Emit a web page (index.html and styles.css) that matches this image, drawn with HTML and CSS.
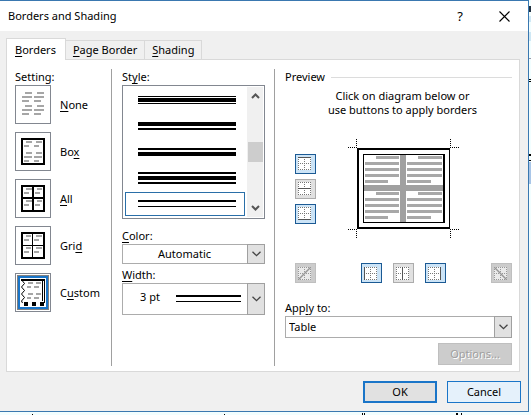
FILE: index.html
```html
<!DOCTYPE html>
<html lang="en">
<head>
    <meta charset="UTF-8">
    <meta name="viewport" content="width=device-width, initial-scale=1.0">
    <title>Borders and Shading</title>
    <link rel="stylesheet" href="styles.css">
</head>
<body>

<!-- shared drawings -->
<svg class="defs" width="0" height="0" aria-hidden="true">
    <symbol id="chevron" viewBox="0 0 9 6">
        <path d="M.5 .7 4.5 4.7 8.5 .7" fill="none" stroke="#444" stroke-width="1.3"/>
    </symbol>
    <symbol id="cell" viewBox="0 0 13 13">
        <rect width="13" height="13" fill="#fff"/>
        <path d="M0 .5h13M0 6.5h13M0 12.5h13M.5 0v13M6.5 0v13M12.5 0v13" stroke="#777" stroke-dasharray="1 1"/>
    </symbol>
</svg>

<div class="dialog" role="dialog" aria-labelledby="title">
    <div class="titlebar">
        <h1 id="title">Borders and Shading</h1>
        <button type="button" class="title-btn help" aria-label="Help">?</button>
        <button type="button" class="title-btn" aria-label="Close">
            <svg width="11" height="11" viewBox="0 0 11 11"><path d="M.5 .5l10 10M10.5 .5l-10 10" stroke="#000" stroke-width="1.1"/></svg>
        </button>
    </div>

    <div class="tabs" role="tablist">
        <button type="button" class="tab active" role="tab" aria-selected="true"><u>B</u>orders</button>
        <button type="button" class="tab" role="tab"><u>P</u>age Border</button>
        <button type="button" class="tab" role="tab"><u>S</u>hading</button>
    </div>

    <div class="panel" role="tabpanel">
        <div class="settings">
            <h2>Setting:</h2>
            <button type="button" class="setting">
                <svg width="36" height="39" viewBox="0 0 36 39">
                    <path d="M10 8h7M7 12h10M7 16h7M22 8h7M19 12h10M19 16h7M10 21h7M7 25h10M7 29h7M22 21h7M19 25h10M19 29h7" stroke="#a6a6a6" stroke-width="2"/>
                </svg>
                <span><u>N</u>one</span>
            </button>
            <button type="button" class="setting">
                <svg width="36" height="39" viewBox="0 0 36 39">
                    <rect x="7" y="7" width="22" height="25" fill="none" stroke="#000" stroke-width="2"/>
                    <path d="M11 10h6M9 14h5M21 10h6M19 14h5M11 21h6M9 25h8M9 29h5M21 21h6M19 25h8M19 29h5" stroke="#a6a6a6" stroke-width="2"/>
                </svg>
                <span>Bo<u>x</u></span>
            </button>
            <button type="button" class="setting">
                <svg width="36" height="39" viewBox="0 0 36 39">
                    <path d="M11 10h6M9 14h5M22 10h5M20 14h5M11 22h6M9 26h5M22 22h5M20 26h5" stroke="#a6a6a6" stroke-width="2"/>
                    <path d="M7 7h22v25H7zM18 7v25M7 19h22" fill="none" stroke="#000" stroke-width="2"/>
                </svg>
                <span><u>A</u>ll</span>
            </button>
            <button type="button" class="setting">
                <svg width="36" height="39" viewBox="0 0 36 39">
                    <path d="M11 10h5M9 14h5M21 10h6M19 14h5M11 22h5M9 26h5M21 22h6M19 26h5" stroke="#a6a6a6" stroke-width="2"/>
                    <path d="M17.5 7v25M7 19.5h22" stroke="#000"/>
                    <rect x="7" y="7" width="22" height="25" fill="none" stroke="#000" stroke-width="2"/>
                </svg>
                <span>Gri<u>d</u></span>
            </button>
            <button type="button" class="setting" aria-pressed="true">
                <svg width="36" height="39" viewBox="0 0 36 39">
                    <rect x="2.5" y="2.5" width="31" height="34" fill="none" stroke="#000" stroke-dasharray="1 1"/>
                    <rect x="4" y="4" width="28" height="31" fill="none" stroke="#1a75c8" stroke-width="2"/>
                    <path d="M6 7h24" stroke="#000" stroke-width="2"/>
                    <path d="M7.5 8l2 2.5-3 3.5 3 3.5-3 3.5 3 3.5-3 3.5 1 2" fill="none" stroke="#000"/>
                    <path d="M27.5 8v20M29.5 8v22" stroke="#000"/>
                    <path d="M13 10h5M12 14h4M21 10h5M19 14h5M13 21h5M12 25h4M21 21h5M19 25h5" stroke="#a6a6a6" stroke-width="2"/>
                    <path d="M9 29h4v4H9zM17 29h4v4h-4zM25 29h4v4h-4z"/>
                </svg>
                <span>C<u>u</u>stom</span>
            </button>
        </div>

        <div class="line-options">
            <h2 id="style-label">St<u>y</u>le:</h2>
            <div class="listbox">
                <div class="items" role="listbox" aria-labelledby="style-label">
                    <div class="item" role="option"><svg width="98" height="12"><path d="M0 2h98v1H0zM0 4h98v4H0zM0 9h98v1H0z"/></svg></div>
                    <div class="item" role="option"><svg width="98" height="12"><path d="M0 2h98v4H0zM0 8h98v2H0z"/></svg></div>
                    <div class="item" role="option"><svg width="98" height="12"><path d="M0 2h98v2H0zM0 6h98v4H0z"/></svg></div>
                    <div class="item" role="option"><svg width="98" height="12"><path d="M0 0h98v2H0zM0 4h98v4H0zM0 10h98v2H0z"/></svg></div>
                    <div class="item selected" role="option" aria-selected="true"><svg width="98" height="12"><path d="M0 2h98v2H0zM0 8h98v1H0z"/></svg></div>
                </div>
                <div class="scrollbar">
                    <svg width="9" height="6" viewBox="0 0 9 6"><path d="M1 5l3.5-3.5L8 5" fill="none" stroke="#555" stroke-width="2"/></svg>
                    <div class="thumb"></div>
                    <svg width="9" height="6" viewBox="0 0 9 6"><path d="M1 1l3.5 3.5L8 1" fill="none" stroke="#555" stroke-width="2"/></svg>
                </div>
            </div>

            <label for="color"><u>C</u>olor:</label>
            <div class="dropdown">
                <select id="color" class="centered"><option>Automatic</option></select>
                <span class="arrow"><svg width="9" height="6"><use href="#chevron"/></svg></span>
            </div>

            <label for="width"><u>W</u>idth:</label>
            <div class="dropdown tall">
                <select id="width"><option>3 pt</option></select>
                <svg class="sample" width="65" height="7"><path d="M0 0h65v2H0zM0 6h65v1H0z"/></svg>
                <span class="arrow"><svg width="9" height="6"><use href="#chevron"/></svg></span>
            </div>
        </div>

        <div class="preview">
            <h2 class="ruled">Preview</h2>
            <p>Click on diagram below or<br>use buttons to apply borders</p>

            <div class="diagram">
                <div class="side">
                    <button type="button" class="edge on" aria-label="Top border">
                        <svg width="13" height="13"><use href="#cell"/><path d="M0 .5h13" stroke="#555"/></svg>
                    </button>
                    <button type="button" class="edge" aria-label="Inside horizontal border">
                        <svg width="13" height="13"><use href="#cell"/><path d="M0 6.5h13" stroke="#555"/></svg>
                    </button>
                    <button type="button" class="edge on" aria-label="Bottom border">
                        <svg width="13" height="13"><use href="#cell"/><path d="M0 12.5h13" stroke="#555"/></svg>
                    </button>
                </div>
                <svg class="page" width="111" height="99" viewBox="0 0 111 99">
                    <path d="M8.5 0v9M0 8.5h9M102.5 0v9M102 8.5h9M8.5 90v9M0 90.5h9M102.5 90v9M102 90.5h9" stroke="#000" stroke-dasharray="1 1"/>
                    <path fill-rule="evenodd" d="M9 9h93v81H9zM11 11v77h90V11z"/>
                    <path fill-rule="evenodd" d="M15 15h82v69H15zM16 16v67h79V16z"/>
                    <path d="M52 16h6v67h-6zM16 46h79v6H16z" fill="#a0a0a0"/>
                    <path d="M28 18.5h23M17 24.5h34M17 30.5h34M17 36.5h34M17 42.5h23M70 18.5h24M59 24.5h35M59 30.5h35M59 36.5h35M59 42.5h24M28 54.5h23M17 60.5h34M17 66.5h34M17 72.5h34M17 78.5h23M70 54.5h24M59 60.5h35M59 66.5h35M59 72.5h35M59 78.5h24" stroke="#a8a8a8" stroke-width="3"/>
                </svg>
                <button type="button" class="edge" disabled aria-label="Diagonal up border">
                    <svg width="13" height="13"><use href="#cell"/><path d="M0 13L13 0" stroke="#777" stroke-width="1.5"/></svg>
                </button>
                <div class="bottom">
                    <button type="button" class="edge on" aria-label="Left border">
                        <svg width="13" height="13"><use href="#cell"/><path d="M.5 0v13" stroke="#555"/></svg>
                    </button>
                    <button type="button" class="edge" aria-label="Inside vertical border">
                        <svg width="13" height="13"><use href="#cell"/><path d="M6.5 0v13" stroke="#555"/></svg>
                    </button>
                    <button type="button" class="edge on" aria-label="Right border">
                        <svg width="13" height="13"><use href="#cell"/><path d="M12.5 0v13" stroke="#555"/></svg>
                    </button>
                </div>
                <button type="button" class="edge" disabled aria-label="Diagonal down border">
                    <svg width="13" height="13"><use href="#cell"/><path d="M0 0l13 13" stroke="#777" stroke-width="1.5"/></svg>
                </button>
            </div>

            <label for="apply">App<u>l</u>y to:</label>
            <div class="dropdown apply">
                <select id="apply"><option>Table</option></select>
                <span class="arrow"><svg width="9" height="6"><use href="#chevron"/></svg></span>
            </div>
            <button type="button" class="btn options" disabled>Options...</button>
        </div>
    </div>

    <div class="actions">
        <button type="submit" class="btn default">OK</button>
        <button type="button" class="btn hot">Cancel</button>
    </div>
</div>

</body>
</html>
```
FILE: styles.css
```css
* {
    box-sizing: border-box;
}
body {
    margin: 0;
    min-height: 100vh;
    /* edge of the document window behind the dialog */
    background:
        linear-gradient(#234 0 0) right 6px / 2px 6px no-repeat,
        linear-gradient(#cfe8f5 0 0) right 16px / 2px 6px no-repeat,
        linear-gradient(#cfe8f5 0 0) right 32px / 2px 9px no-repeat,
        linear-gradient(#99a 0 0) right 58px / 2px 1px no-repeat,
        linear-gradient(#000 0 0) right 79px / 2px 1px no-repeat,
        linear-gradient(#000 0 0) right 81px / 2px 1px no-repeat,
        linear-gradient(#000 0 0) right 154px / 2px 2px no-repeat,
        linear-gradient(#000 0 0) right 160px / 2px 1px no-repeat,
        linear-gradient(#a9c6e8 0 0) right 162px / 2px 22px no-repeat,
        linear-gradient(#000 0 0) 32px bottom / 1px 1px no-repeat,
        linear-gradient(#000 0 0) 224px bottom / 1px 1px no-repeat,
        linear-gradient(#000 0 0) 362px bottom / 1px 2px no-repeat,
        linear-gradient(#000 0 0) 364px bottom / 1px 2px no-repeat,
        linear-gradient(#000 0 0) 456px bottom / 2px 2px no-repeat,
        linear-gradient(#000 0 0) 461px bottom / 1px 2px no-repeat,
        #f2feff;
    font-family: "Noto Sans", "Open Sans", sans-serif;
    font-size: 11px;
    line-height: 16px;
    color: #000;
}
button, select {
    font: inherit;
    color: inherit;
    margin: 0;
    padding: 0;
    border-radius: 0;
}
svg {
    display: block;
    flex: none;
}
u {
    text-underline-offset: 2px;
    text-decoration-skip-ink: none;
}
.defs {
    position: absolute;
}
.dialog {
    margin-right: 2px;
    background-color: #f0f0f0;
    border: 1px solid #3a78b0;
    border-left: none;
}
.titlebar {
    display: flex;
    align-items: center;
    height: 30px;
    padding: 0 17px 0 8px;
    background-color: #fff;
}
h1 {
    flex: 1;
    margin: 0;
    font-size: 11px;
    font-weight: normal;
}
.title-btn {
    display: flex;
    align-items: center;
    justify-content: center;
    width: 14px;
    border: none;
    background: none;
}
.help {
    margin-right: 30px;
    font-size: 13px;
}

/* tabs */
.tabs {
    display: flex;
    align-items: flex-end;
    margin: 7px 0 0 6px;
}
.tab {
    height: 19px;
    padding: 0 7px;
    border: 1px solid #d9d9d9;
    border-left: none;
    border-bottom: none;
    background-color: #f0f0f0;
}
.tab.active {
    height: 22px;
    margin-bottom: -1px;
    padding: 0 9px 0 8px;
    border-left: 1px solid #d9d9d9;
    background-color: #fff;
    z-index: 1;
}

.panel {
    display: flex;
    margin: 0 8px 0 6px;
    padding: 9px 7px 5px 8px;
    border: 1px solid #d9d9d9;
    background-color: #fff;
}
h2, label {
    display: block;
    margin: 0;
    font-size: 11px;
    font-weight: normal;
}

/* setting column */
.settings {
    width: 97px;
    border-right: 1px solid #a0a0a0;
}
.setting {
    display: flex;
    align-items: center;
    gap: 9px;
    margin-bottom: 8px;
    border: none;
    background: none;
}
.setting svg {
    outline: 1px solid #828790;
    outline-offset: -1px;
}

/* style, color, width */
.line-options {
    width: 163px;
    padding: 0 9px 0 10px;
    border-right: 1px solid #a0a0a0;
}
.listbox {
    display: flex;
    height: 134px;
    margin-bottom: 9px;
    border: 1px solid #828790;
}
.items {
    flex: 1;
    display: flex;
    flex-direction: column;
    gap: 2px;
    padding: 2px;
}
.item {
    display: flex;
    align-items: center;
    height: 24px;
    padding-left: 12px;
    border: 1px solid transparent;
}
.item.selected {
    border-color: #2a6fa8;
}
.scrollbar {
    display: flex;
    flex-direction: column;
    align-items: center;
    justify-content: space-between;
    width: 16px;
    margin: 1px 1px 1px 0;
    padding: 6px 0;
    background-color: #f0f0f0;
}
.thumb {
    width: 15px;
    height: 20px;
    background-color: #cdcdcd;
}
.dropdown {
    position: relative;
    height: 20px;
    margin-bottom: 3px;
}
.dropdown select {
    appearance: none;
    width: 100%;
    height: 100%;
    padding: 0 18px 0 3px;
    border: 1px solid #acacac;
    background-color: #fff;
}
.dropdown select.centered {
    padding-left: 0;
    text-align: center;
    text-align-last: center;
}
.dropdown.tall {
    height: 32px;
}
.dropdown.tall select {
    padding: 0 18px 4px 17px;
}
.arrow {
    position: absolute;
    top: 0;
    right: 0;
    bottom: 0;
    display: flex;
    align-items: center;
    justify-content: center;
    width: 18px;
    border: 1px solid #a0a0a0;
    background-color: #e1e1e1;
    pointer-events: none;
}
.sample {
    position: absolute;
    top: 12px;
    right: 24px;
    pointer-events: none;
}

/* preview */
.preview {
    flex: 1;
    padding: 0 0 1px 10px;
}
.ruled {
    display: flex;
    align-items: center;
    gap: 6px;
}
.ruled::after {
    content: "";
    flex: 1;
    height: 1px;
    background-color: #dcdcdc;
}
.preview p {
    margin: 4px 0 22px 8px;
    line-height: 14px;
    text-align: center;
}
.diagram {
    display: grid;
    grid-template-columns: 21px 1fr 21px;
    row-gap: 25px;
    margin-bottom: 17px;
    padding-left: 10px;
}
.side {
    display: flex;
    flex-direction: column;
    justify-content: center;
    gap: 5px;
}
.page {
    grid-column: 2 / 4;
    margin-left: 32px;
}
.bottom {
    display: flex;
    justify-content: center;
    gap: 11px;
}
.edge {
    display: flex;
    align-items: center;
    width: 21px;
    height: 20px;
    padding-left: 2px;
    border: 1px solid #acacac;
    background-color: #e1e1e1;
}
.edge.on {
    border-color: #1b5a94;
    background-color: #cce4f7;
}
.edge:disabled {
    border-color: #bfbfbf;
    background-color: #ccc;
}
.edge:disabled svg {
    opacity: .6;
}
.dropdown.apply {
    height: 22px;
    margin-bottom: 5px;
}
.btn {
    width: 74px;
    height: 22px;
    border: 1px solid #adadad;
    background-color: #e1e1e1;
}
.options {
    display: block;
    margin-left: auto;
    border-color: #bfbfbf;
    background-color: #ccc;
    color: #a0a0a0;
    text-shadow: 1px 1px #fff;
}
.actions {
    display: flex;
    justify-content: flex-end;
    gap: 10px;
    padding: 9px 7px 8px;
}
.btn.default {
    border: 2px solid #1a75c8;
}
.btn.hot {
    border-color: #1a75c8;
    background-color: #e5f1fb;
}
```
